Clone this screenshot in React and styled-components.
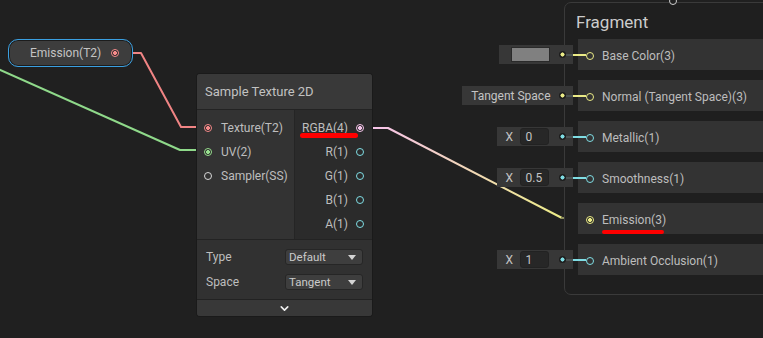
import styled, { createGlobalStyle } from "styled-components";
import { ChevronDown } from "lucide-react";

const GlobalStyle = createGlobalStyle`
  html, body {
    margin: 0;
    background: #202020;
  }
  body {
    font-family: Roboto, Inter, "Noto Sans", sans-serif;
    color: #c4c4c4;
  }
`;

const COLORS = {
  texture: "#f58a8a",
  vec2: "#98e08f",
  vec4: "#f5c4ea",
  vec3: "#eaea86",
  vec1: "#7fdde4",
  sampler: "#d8d8d8",
};

const Canvas = styled.div`
  position: relative;
  width: 763px;
  height: 338px;
  overflow: hidden;
  background: #202020;
  white-space: nowrap;
`;

const Wires = styled.svg`
  position: absolute;
  inset: 0;
`;

const Port = styled.span`
  box-sizing: border-box;
  flex: none;
  width: 8px;
  height: 8px;
  border-radius: 50%;
  border: 1.5px solid ${(p) => p.$color};
  background: ${(p) =>
    p.$filled
      ? `radial-gradient(circle, ${p.$color} 0 1.8px, #262626 2.2px)`
      : "transparent"};
`;

/* property node (pill) */
const PropertyNode = styled.div`
  position: absolute;
  left: 8px;
  top: 39px;
  box-sizing: border-box;
  width: 125px;
  height: 28px;
  display: flex;
  align-items: center;
  gap: 10px;
  padding: 0 15px 0 11px;
  border: 1.5px solid #3a9fe0;
  border-radius: 10px;
  background: #3d3d3d;
  box-shadow: inset 0 0 0 1px #1c1c1c;
  font-size: 12px;
  color: #c4c4c4;
`;

const PillDot = styled.span`
  width: 4px;
  height: 4px;
  border-radius: 50%;
  background: ${COLORS.vec2};
`;

const PillLabel = styled.span`
  flex: 1;
`;

/* sample texture node */
const Node = styled.div`
  position: absolute;
  left: 197px;
  top: 74px;
  width: 175px;
  background: #333;
  box-shadow: 0 0 0 1px #1a1a1a;
  border-radius: 3px;
  overflow: hidden;
`;

const NodeHeader = styled.div`
  height: 35px;
  display: flex;
  align-items: center;
  padding: 0 8px;
  background: #393939;
  border-bottom: 1px solid #232323;
  font-size: 13px;
  color: #c2c2c2;
`;

const NodeBody = styled.div`
  display: grid;
  grid-template-columns: 97px 1fr;
  height: 129px;
`;

const SlotColumn = styled.div`
  display: flex;
  flex-direction: column;
  padding-top: 5.5px;
  background: ${(p) => (p.$out ? "#2b2b2b" : "#333")};
  border-left: ${(p) => (p.$out ? "1px solid #252525" : "none")};
`;

const Slot = styled.div`
  height: 24px;
  display: flex;
  align-items: center;
  justify-content: ${(p) => (p.$out ? "flex-end" : "flex-start")};
  gap: ${(p) => (p.$out ? "8px" : "9px")};
  padding: ${(p) => (p.$out ? "0 8px 0 0" : "0 0 0 7px")};
  font-size: 12px;
  color: #bebebe;
`;

const Settings = styled.div`
  padding: 4.5px 9px 4.5px 9px;
  background: #313131;
  border-top: 1px solid #232323;
`;

const SettingRow = styled.div`
  height: 25px;
  display: grid;
  grid-template-columns: 79px 78px;
  align-items: center;
  font-size: 12px;
  color: #bebebe;
`;

const Dropdown = styled.div`
  box-sizing: border-box;
  height: 16px;
  display: flex;
  align-items: center;
  justify-content: space-between;
  padding: 0 6px 0 3px;
  background: #3e3e3e;
  border: 1px solid #262626;
  border-radius: 3px;
  font-size: 11.5px;
  color: #cacaca;
`;

const Caret = styled.span`
  width: 0;
  height: 0;
  border-left: 4px solid transparent;
  border-right: 4px solid transparent;
  border-top: 5px solid #d4d4d4;
`;

const Collapse = styled.div`
  height: 16px;
  display: flex;
  align-items: center;
  justify-content: center;
  background: #383838;
  border-top: 1px solid #222;
  color: #eee;
`;

/* fragment context */
const Fragment = styled.div`
  position: absolute;
  left: 564px;
  top: 2px;
  width: 260px;
  height: 291px;
  border: 1px solid #3a3a3a;
  border-radius: 7px;
  background: #1f1f1f;
`;

const TopPort = styled.span`
  position: absolute;
  left: 104px;
  top: -6px;
  box-sizing: border-box;
  width: 8px;
  height: 8px;
  border-radius: 50%;
  border: 1.5px solid #cfcfcf;
  background: #202020;
`;

const FragmentTitle = styled.div`
  height: 36px;
  display: flex;
  align-items: center;
  padding: 2px 0 0 11px;
  box-sizing: border-box;
  font-size: 17px;
  color: #cccccc;
`;

const Blocks = styled.div`
  display: flex;
  flex-direction: column;
  gap: 10px;
  margin-left: 13px;
`;

const Block = styled.div`
  position: relative;
  height: 31px;
  box-sizing: border-box;
  padding: 2px 0 0 8px;
  display: flex;
  align-items: center;
  gap: 8px;
  background: #333;
  font-size: 12px;
  color: #bdbdbd;
`;

const InlineInput = styled.div`
  position: absolute;
  right: calc(100% - 8px);
  top: 6px;
  display: flex;
  align-items: center;
`;

const InputBox = styled.div`
  height: 19px;
  display: flex;
  align-items: center;
  padding-left: ${(p) => p.$pad}px;
  background: #373737;
  font-size: 12px;
  color: #c4c4c4;
`;

const Swatch = styled.span`
  width: 39px;
  height: 15px;
  box-sizing: border-box;
  background: #808080;
  border: 1px solid #2a2a2a;
  margin-right: 9px;
`;

const AxisLabel = styled.span`
  width: 14px;
`;

const Field = styled.span`
  box-sizing: border-box;
  width: 29px;
  height: 17px;
  display: flex;
  align-items: center;
  padding-left: 5px;
  margin-right: 10px;
  background: #272727;
  border: 1px solid #222;
  border-radius: 3px;
`;

const BoxText = styled.span`
  margin-right: 8px;
`;

const InputDot = styled.span`
  width: 7px;
  height: 7px;
  border-radius: 50%;
  background: ${(p) => `radial-gradient(circle, ${p.$color} 0 1.8px, #1c1c1c 2.3px)`};
`;

const Stub = styled.span`
  width: 7.5px;
  height: 2px;
  background: #4b5252;
`;

const Connector = styled.span`
  width: 13px;
  height: 2px;
  background: ${(p) => p.$color};
`;

const Mark = styled.span`
  position: absolute;
  left: ${(p) => p.$x}px;
  top: ${(p) => p.$y}px;
  width: ${(p) => p.$w}px;
  height: 4.5px;
  border-radius: 3px;
  background: #ff0000;
`;

const blocks = [
  { label: "Base Color(3)", color: COLORS.vec3, input: { kind: "color" } },
  {
    label: "Normal (Tangent Space)(3)",
    color: COLORS.vec3,
    input: { kind: "text", value: "Tangent Space" },
  },
  { label: "Metallic(1)", color: COLORS.vec1, input: { kind: "x", value: "0" } },
  { label: "Smoothness(1)", color: COLORS.vec1, input: { kind: "x", value: "0.5" } },
  { label: "Emission(3)", color: COLORS.vec3, connected: true },
  { label: "Ambient Occlusion(1)", color: COLORS.vec1, input: { kind: "x", value: "1" } },
];

const inputs = [
  { label: "Texture(T2)", color: COLORS.texture, filled: true },
  { label: "UV(2)", color: COLORS.vec2, filled: true },
  { label: "Sampler(SS)", color: COLORS.sampler },
];

const outputs = [
  { label: "RGBA(4)", color: COLORS.vec4, filled: true },
  { label: "R(1)", color: COLORS.vec1 },
  { label: "G(1)", color: COLORS.vec1 },
  { label: "B(1)", color: COLORS.vec1 },
  { label: "A(1)", color: COLORS.vec1 },
];

const BlockInput = ({ input, color }) => {
  const pad = input.kind === "color" ? 12 : 9;
  return (
    <InlineInput>
      <InputBox $pad={pad}>
        {input.kind === "color" && <Swatch />}
        {input.kind === "text" && <BoxText>{input.value}</BoxText>}
        {input.kind === "x" && (
          <>
            <AxisLabel>X</AxisLabel>
            <Field>{input.value}</Field>
          </>
        )}
        <InputDot $color={color} />
        <Stub />
      </InputBox>
      <Connector $color={color} />
    </InlineInput>
  );
};

export default function App() {
  return (
    <>
      <GlobalStyle />
      <Canvas>
        <Wires width="763" height="338">
          <defs>
            <linearGradient id="rgbaWire" gradientUnits="userSpaceOnUse" x1="372" y1="128" x2="562" y2="218">
              <stop offset="0" stopColor="#f7c3ea" />
              <stop offset="1" stopColor="#ecec86" />
            </linearGradient>
          </defs>
          <polyline
            points="-20,61 180,150 200,150"
            fill="none"
            stroke="#8fd98a"
            strokeWidth="2"
            strokeLinejoin="round"
          />
          <polyline
            points="133,53 141,53 181,127 200,127"
            fill="none"
            stroke="#f08484"
            strokeWidth="2"
            strokeLinejoin="round"
          />
          <polyline
            points="372,128 388,128 562,218"
            fill="none"
            stroke="url(#rgbaWire)"
            strokeWidth="2"
            strokeLinejoin="round"
          />
          <line x1="561" y1="218" x2="587" y2="218" stroke="#8e8e5c" strokeWidth="2" />
        </Wires>

        <PropertyNode>
          <PillDot />
          <PillLabel>Emission(T2)</PillLabel>
          <Port $color={COLORS.texture} $filled />
        </PropertyNode>

        <Node>
          <NodeHeader>Sample Texture 2D</NodeHeader>
          <NodeBody>
            <SlotColumn>
              {inputs.map((s) => (
                <Slot key={s.label}>
                  <Port $color={s.color} $filled={s.filled} />
                  {s.label}
                </Slot>
              ))}
            </SlotColumn>
            <SlotColumn $out>
              {outputs.map((s) => (
                <Slot key={s.label} $out>
                  {s.label}
                  <Port $color={s.color} $filled={s.filled} />
                </Slot>
              ))}
            </SlotColumn>
          </NodeBody>
          <Settings>
            <SettingRow>
              <span>Type</span>
              <Dropdown>
                Default
                <Caret />
              </Dropdown>
            </SettingRow>
            <SettingRow>
              <span>Space</span>
              <Dropdown>
                Tangent
                <Caret />
              </Dropdown>
            </SettingRow>
          </Settings>
          <Collapse>
            <ChevronDown size={13} strokeWidth={3} />
          </Collapse>
        </Node>

        <Fragment>
          <TopPort />
          <FragmentTitle>Fragment</FragmentTitle>
          <Blocks>
            {blocks.map((b) => (
              <Block key={b.label}>
                {b.input && <BlockInput input={b.input} color={b.color} />}
                <Port $color={b.color} $filled={b.connected} />
                {b.label}
              </Block>
            ))}
          </Blocks>
        </Fragment>

        <Mark $x={300} $y={133} $w={58} />
        <Mark $x={602} $y={229.5} $w={62} />
      </Canvas>
    </>
  );
}
